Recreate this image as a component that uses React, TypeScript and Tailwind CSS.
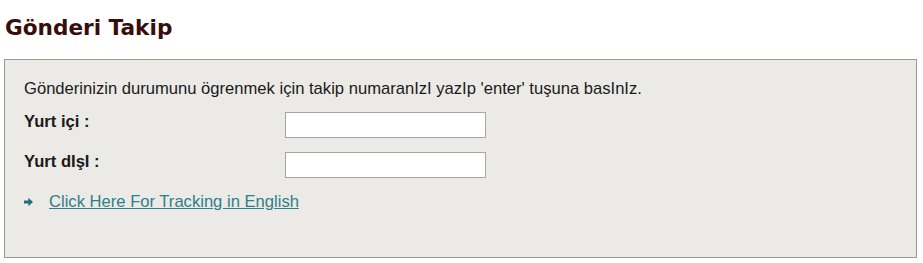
const rows = [
  { label: "Yurt içi :" },
  { label: "Yurt dIşI :" },
];

const ArrowIcon = () => (
  <svg width="9" height="10" viewBox="0 0 9 10" className="shrink-0">
    <path d="M0 3.6h4.4V0.8L9 5 4.4 9.2V6.4H0z" fill="#1f6f7c" />
  </svg>
);

export default function App() {
  return (
    <div className="w-[923px] h-[263px] bg-white font-['Liberation_Sans',Arial,sans-serif] text-[#1a1a1a]">
      <h1 className="pl-[5px] pt-[16px] h-[59px] text-[21.6px] leading-[24px] font-bold text-[#3a0d0d] font-['DejaVu_Sans',Verdana,sans-serif]">
        Gönderi Takip
      </h1>
      <div className="ml-[4px] w-[913px] h-[199px] border border-[#9a9a9a] bg-[#ebeae6] pl-[19px] pt-[19px]">
        <p className="text-[16.6px] leading-[20px]">
          Gönderinizin durumunu ögrenmek için takip numaranIzI yazIp 'enter' tuşuna basInIz.
        </p>
        <div className="mt-[13px] flex flex-col gap-[14px]">
          {rows.map((row) => (
            <div key={row.label} className="flex items-start">
              <label className="w-[261px] pt-[1px] text-[16.6px] leading-[18px] font-bold">{row.label}</label>
              <input
                type="text"
                className="w-[201px] h-[26px] bg-white border border-[#a6a6a6] outline-none px-1"
              />
            </div>
          ))}
        </div>
        <div className="mt-[14px] flex items-center gap-[16px]">
          <ArrowIcon />
          <a href="#" className="text-[16.6px] leading-[20px] text-[#2d7f89] underline">
            Click Here For Tracking in English
          </a>
        </div>
      </div>
    </div>
  );
}
